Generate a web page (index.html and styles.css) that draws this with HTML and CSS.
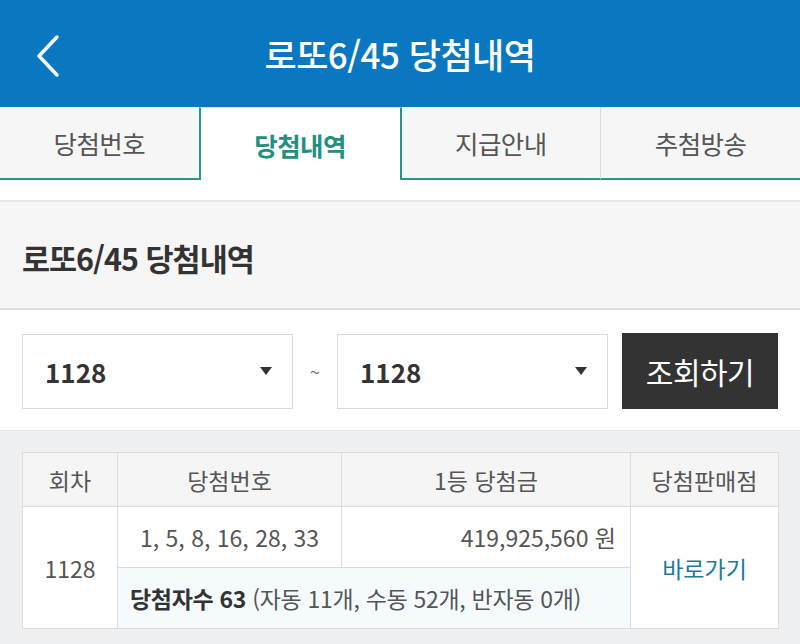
FILE: index.html
```html
<!DOCTYPE html>
<html lang="ko">
<head>
<meta charset="utf-8">
<link rel="stylesheet" href="styles.css">
</head>
<body>
<header class="topbar">
  <svg class="back" width="40" height="50" viewBox="0 0 40 50"><path d="M27 6 L9 25 L27 44" fill="none" stroke="#fff" stroke-width="3.5" stroke-linecap="round" stroke-linejoin="round"/></svg>
  <h1 class="title">로또6/45 당첨내역</h1>
</header>
<nav class="tabs">
  <div class="tab">당첨번호</div>
  <div class="tab active">당첨내역</div>
  <div class="tab">지급안내</div>
  <div class="tab last">추첨방송</div>
</nav>
<div class="gap"></div>
<section class="headline"><h2>로또6/45 당첨내역</h2></section>
<div class="controls">
  <div class="select"><span>1128</span><i class="caret"></i></div>
  <span class="tilde">~</span>
  <div class="select"><span>1128</span><i class="caret"></i></div>
  <button class="search">조회하기</button>
</div>
<div class="result">
  <table class="tbl">
    <colgroup><col class="c1"><col class="c2"><col class="c3"><col class="c4"></colgroup>
    <thead>
      <tr><th>회차</th><th>당첨번호</th><th>1등 당첨금</th><th>당첨판매점</th></tr>
    </thead>
    <tbody>
      <tr class="r1">
        <td rowspan="2" class="round">1128</td>
        <td class="nums">1, 5, 8, 16, 28, 33</td>
        <td class="prize">419,925,560 원</td>
        <td rowspan="2" class="shop">바로가기</td>
      </tr>
      <tr class="r2">
        <td colspan="2" class="winners"><b>당첨자수 63</b> (자동 11개, 수동 52개, 반자동 0개)</td>
      </tr>
    </tbody>
  </table>
</div>
</body>
</html>
```
FILE: styles.css
```css
* { box-sizing: border-box; }
html, body { margin: 0; padding: 0; }
body {
  width: 800px;
  height: 644px;
  overflow: hidden;
  font-family: "Noto Sans CJK KR", "Noto Sans", sans-serif;
  background: #fff;
  color: #333;
}
.topbar {
  height: 107px;
  background: #0a77c1;
  display: flex;
  align-items: center;
  justify-content: center;
  position: relative;
}
.back { position: absolute; left: 30px; top: 31px; }
.title {
  margin: 0;
  color: #fff;
  font-size: 35px;
  font-weight: 500;
  letter-spacing: -0.5px;
}
.tabs {
  display: flex;
  height: 73px;
  background: #f6f6f6;
}
.tab {
  flex: 1;
  display: flex;
  align-items: center;
  justify-content: center;
  font-size: 25.5px;
  color: #555;
  border-bottom: 2px solid #2e9484;
  letter-spacing: -0.5px;
}
.tab.active {
  background: #fff;
  color: #22907f;
  font-weight: 700;
  border: 2px solid #2e9484;
  border-top: 1px solid #cfe6e2;
  border-bottom: none;
}
.tab.last { border-left: 1px solid #ddd; }
.gap { height: 20px; }
.headline {
  height: 110px;
  background: #f6f6f6;
  border-top: 2px solid #e6e6e6;
  border-bottom: 2px solid #dedede;
  display: flex;
  align-items: center;
  padding: 6px 22px 0;
}
.headline h2 {
  margin: 0;
  font-size: 30.5px;
  font-weight: 700;
  color: #333;
  letter-spacing: -1px;
}
.controls {
  display: flex;
  align-items: center;
  padding: 23px 22px 21px 22px;
  height: 120px;
}
.select {
  width: 271px;
  height: 75px;
  border: 1px solid #dadada;
  display: flex;
  align-items: center;
  justify-content: space-between;
  padding: 0 20px 0 22px;
  font-size: 26px;
  font-weight: 700;
  color: #333;
}
.caret {
  width: 0; height: 0;
  border-left: 6px solid transparent;
  border-right: 6px solid transparent;
  border-top: 8px solid #333;
}
.tilde {
  width: 44px;
  text-align: center;
  font-size: 18px;
  color: #777;
}
.search {
  margin-left: 14px;
  width: 156px;
  height: 76px;
  background: #333;
  color: #fff;
  border: none;
  font-family: inherit;
  font-size: 30px;
  font-weight: 400;
  letter-spacing: -0.5px;
}
.result {
  background: #eef0f1;
  border-top: 1px solid #e3e5e6;
  height: 214px;
  padding: 21px 22px 0 22px;
}
.tbl {
  width: 756px;
  border-collapse: collapse;
  table-layout: fixed;
  background: #fff;
  font-size: 23px;
  color: #555;
}
.c1 { width: 95px; }
.c2 { width: 224px; }
.c3 { width: 289px; }
.c4 { width: 148px; }
.tbl th, .tbl td { border: 1px solid #dcdcdc; }
.tbl th {
  height: 54px;
  background: #f5f5f5;
  font-weight: 400;
  color: #555;
}
.r1 td { height: 61px; }
.r2 td { height: 61px; }
.round, .nums, .shop { text-align: center; }
.prize { text-align: right; padding-right: 14px; }
.shop { color: #1a7c9c; }
.winners {
  background: #f5fbfd;
  padding-left: 12px;
  color: #555;
  letter-spacing: -0.3px;
}
.winners b { color: #333; font-weight: 700; }
```
